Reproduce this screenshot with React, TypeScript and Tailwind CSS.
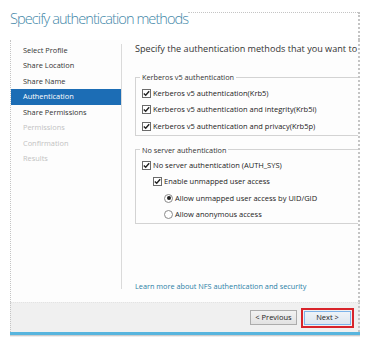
import React from "react";

const font = { fontFamily: '"Open Sans", "Noto Sans", sans-serif' };

function CheckBox() {
  return (
    <span className="w-[9px] h-[9px] border border-[#6b6b6b] bg-white flex items-center justify-center shrink-0">
      <svg width="7" height="7" viewBox="0 0 7 7">
        <path d="M0.8 3.4 L2.7 5.3 L6.2 1.2" fill="none" stroke="#222" strokeWidth="1.4" />
      </svg>
    </span>
  );
}

function Radio({ on }: { on: boolean }) {
  return (
    <span className="w-[9px] h-[9px] rounded-full border border-[#8a8a8a] bg-white flex items-center justify-center shrink-0">
      {on && <span className="w-[4px] h-[4px] rounded-full bg-[#222]" />}
    </span>
  );
}

const nav: { label: string; state: "normal" | "active" | "disabled" }[] = [
  { label: "Select Profile", state: "normal" },
  { label: "Share Location", state: "normal" },
  { label: "Share Name", state: "normal" },
  { label: "Authentication", state: "active" },
  { label: "Share Permissions", state: "normal" },
  { label: "Permissions", state: "disabled" },
  { label: "Confirmation", state: "disabled" },
  { label: "Results", state: "disabled" },
];

export default function App() {
  return (
    <div className="w-[371px] h-[340px] bg-white overflow-hidden flex flex-col pl-[10px] pr-[11px]" style={font}>
      <div className="flex h-[40px] shrink-0">
        <div className="text-[14.6px] font-light text-[#3f87a8] leading-[20px] pt-[8px] whitespace-nowrap tracking-[-0.95px]">
          Specify authentication methods
        </div>
        <div className="flex-1 mt-[12px] border-t border-r-2 border-dotted border-[#c4c4c4]" />
      </div>

      <div className="flex flex-1 border-l border-r-2 border-dotted border-[#c4c4c4] bg-[#fdfdfd] min-h-0">
        <div className="w-[110px] shrink-0 pt-[2.5px]">
          {nav.map((n) => (
            <div
              key={n.label}
              className={
                "h-[15.5px] flex items-center pl-[12px] text-[7.4px] whitespace-nowrap " +
                (n.state === "active"
                  ? "bg-[#1c6db5] text-white"
                  : n.state === "disabled"
                  ? "text-[#c2c2c2]"
                  : "text-[#333]")
              }
            >
              {n.label}
            </div>
          ))}
        </div>
        <div className="w-px bg-[#dadada] mt-[4px] mb-[13px] shrink-0" />
        <div className="flex-1 pl-[13px] overflow-hidden flex flex-col">
          <div className="text-[9.1px] leading-[14px] mt-[2px] text-[#333] whitespace-nowrap">
            Specify the authentication methods that you want to
          </div>

          <fieldset className="mt-[15px] w-[250px] border border-[#d3d3d3] shrink-0">
            <legend className="ml-[4px] px-[2px] text-[7.3px] leading-[12px] text-[#333]">
              Kerberos v5 authentication
            </legend>
            <div className="pt-[2px] pl-[6px]">
              {[
                "Kerberos v5 authentication(Krb5)",
                "Kerberos v5 authentication and integrity(Krb5i)",
                "Kerberos v5 authentication and privacy(Krb5p)",
              ].map((t) => (
                <div key={t} className="h-[16.5px] flex items-center gap-[2px] text-[7.5px] text-[#222] whitespace-nowrap">
                  <CheckBox />
                  <span>{t}</span>
                </div>
              ))}
            </div>
          </fieldset>

          <fieldset className="mt-[8px] w-[250px] border border-[#d3d3d3] shrink-0">
            <legend className="ml-[4px] px-[2px] text-[7.3px] leading-[12px] text-[#333]">
              No server authentication
            </legend>
            <div className="pt-[2px] pl-[6px] text-[7.5px] text-[#222] whitespace-nowrap">
              <div className="h-[16.3px] flex items-center gap-[2px]">
                <CheckBox />
                <span>No server authentication (AUTH_SYS)</span>
              </div>
              <div className="h-[16.3px] flex items-center gap-[2px] pl-[11px]">
                <CheckBox />
                <span>Enable unmapped user access</span>
              </div>
              <div className="h-[16.3px] flex items-center gap-[2px] pl-[22px]">
                <Radio on />
                <span>Allow unmapped user access by UID/GID</span>
              </div>
              <div className="h-[16.3px] flex items-center gap-[2px] pl-[22px]">
                <Radio on={false} />
                <span>Allow anonymous access</span>
              </div>
            </div>
          </fieldset>

          <div className="mt-auto mb-[10px] text-[7.3px] text-[#2a7fa6] whitespace-nowrap">
            Learn more about NFS authentication and security
          </div>
        </div>
      </div>

      <div className="h-[30px] shrink-0 bg-[#f0f0f0] border-t border-[#e3e3e3] border-l border-r-2 border-dotted border-l-[#c4c4c4] border-r-[#c4c4c4] flex items-center justify-end pr-[4px] gap-[4px]">
        <button className="w-[47px] h-[15px] border border-[#acacac] bg-gradient-to-b from-[#f2f2f2] to-[#e2e2e2] text-[7.5px] text-[#222] flex items-center justify-center">
          &lt; Previous
        </button>
        <div className="border-2 border-[#d8232a] p-[1px]">
          <button className="w-[47px] h-[14px] border border-[#7eb4ea] bg-gradient-to-b from-[#eef3f8] to-[#dde6ef] text-[7.5px] text-[#222] flex items-center justify-center">
            Next &gt;
          </button>
        </div>
      </div>
      <div className="h-[3px] bg-[#58b5de] shrink-0" />
      <div className="h-[2px] bg-gradient-to-b from-[#bdbdbd] to-white shrink-0 mb-[3px]" />
    </div>
  );
}
